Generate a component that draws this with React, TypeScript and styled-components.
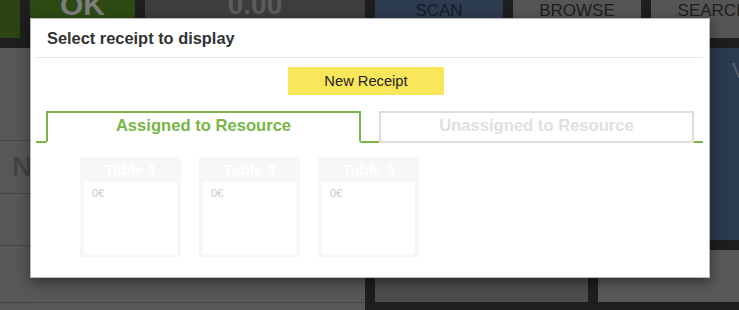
import React from "react";
import styled, { createGlobalStyle } from "styled-components";

const Global = createGlobalStyle`
  html, body { margin: 0; padding: 0; }
  body {
    background: #1e1e1e;
    font-family: "Liberation Sans", Arial, sans-serif;
    width: 739px;
    height: 310px;
    overflow: hidden;
  }
  #root { position: relative; width: 739px; height: 310px; }
`;

const Page = styled.div`
  display: flex;
  flex-direction: column;
  gap: 10px;
  width: 739px;
  height: 310px;
  overflow: hidden;
`;

const TopRow = styled.div`
  display: flex;
  gap: 10px;
  height: 38px;
  flex-shrink: 0;
`;

const TopCell = styled.div<{ $w?: number; $bg: string; $color: string; $size: number; $bold?: boolean; $shift?: number }>`
  flex: ${(p) => (p.$w ? `0 0 ${p.$w}px` : "1 1 auto")};
  background: ${(p) => p.$bg};
  color: ${(p) => p.$color};
  font-size: ${(p) => p.$size}px;
  font-weight: ${(p) => (p.$bold ? 700 : 400)};
  display: flex;
  justify-content: center;
  align-items: flex-start;
  line-height: 20px;
  white-space: nowrap;
  overflow: hidden;

  & > span {
    position: relative;
    top: ${(p) => p.$shift ?? 0}px;
  }
`;

const Main = styled.div`
  display: flex;
  gap: 10px;
  flex: 1;
`;

const LeftPanel = styled.div`
  flex: 0 0 365px;
  background: #575757;
  display: flex;
  flex-direction: column;
`;

const LeftRow = styled.div<{ $h: number }>`
  height: ${(p) => p.$h}px;
  border-bottom: 1px solid #454545;
  box-sizing: border-box;
  flex-shrink: 0;
  display: flex;
  align-items: center;
  padding-left: 12px;
  color: #444;
  font-size: 28px;
  font-weight: 700;
`;

const Column = styled.div<{ $w?: number }>`
  flex: ${(p) => (p.$w ? `0 0 ${p.$w}px` : "1 1 auto")};
  display: flex;
  flex-direction: column;
  gap: 10px;
`;

const BluePanel = styled.div`
  flex: 0 0 192px;
  background: #2c3a4e;
  color: #555f6e;
  font-size: 22px;
  padding: 10px 0 0 134px;
  box-sizing: border-box;
  overflow: hidden;
`;

const GrayButton = styled.div<{ $bg: string }>`
  height: 52px;
  background: ${(p) => p.$bg};
  color: #1a1a1a;
  font-size: 16px;
  display: flex;
  justify-content: center;
  align-items: flex-end;
  padding-bottom: 20px;
  box-sizing: border-box;
`;

const Modal = styled.div`
  position: absolute;
  left: 30px;
  top: 18px;
  width: 680px;
  height: 260px;
  box-sizing: border-box;
  background: #fff;
  border: 1px solid #b8b8b8;
  box-shadow: 0 4px 12px rgba(0, 0, 0, 0.45);
  display: flex;
  flex-direction: column;
`;

const Header = styled.div`
  height: 37px;
  margin: 0 6px 0 5px;
  border-bottom: 1px solid #e8e8e8;
  display: flex;
  align-items: center;
  padding-left: 11px;
  padding-top: 1px;
  font-size: 16.4px;
  font-weight: 700;
  color: #333;
`;

const Body = styled.div`
  margin: 0 6px 0 5px;
  display: flex;
  flex-direction: column;
`;

const ButtonRow = styled.div`
  display: flex;
  justify-content: center;
  padding: 9px 7px 0 0;
`;

const NewReceipt = styled.button`
  width: 156px;
  height: 28px;
  border: none;
  background: #f9e65b;
  color: #222;
  font-family: "Liberation Sans", Arial, sans-serif;
  font-size: 14.7px;
  padding: 0;
  cursor: pointer;
`;

const Tabs = styled.div`
  margin-top: 16px;
  display: flex;
  gap: 18px;
  padding-left: 10px;
  border-bottom: 2px solid #7ab547;
  height: 30px;
`;

const Tab = styled.div<{ $active?: boolean }>`
  width: 315px;
  height: 32px;
  box-sizing: border-box;
  border: 2px solid ${(p) => (p.$active ? "#7ab547" : "#dedede")};
  border-bottom: ${(p) => (p.$active ? "2px solid #fff" : "2px solid #dedede")};
  background: #fff;
  color: ${(p) => (p.$active ? "#7ab547" : "#e0e0e0")};
  font-size: 16.6px;
  font-weight: 700;
  display: flex;
  justify-content: center;
  align-items: center;
  padding-bottom: 3px;
`;

const Cards = styled.div`
  display: flex;
  gap: 18px;
  padding: 14px 0 0 44px;
`;

const Card = styled.div`
  width: 101px;
  height: 100px;
  box-sizing: border-box;
  background: #f7f7f7;
  padding: 0 4px 3px;
  display: flex;
  flex-direction: column;
`;

const CardTitle = styled.div`
  height: 25px;
  color: #fff;
  font-size: 15.5px;
  font-weight: 700;
  display: flex;
  justify-content: center;
  align-items: center;
`;

const CardBody = styled.div`
  flex: 1;
  background: #fff;
  color: #c8c8c8;
  font-size: 11px;
  padding: 5px 8px;
`;

const tables = ["Table 1", "Table 2", "Table 3"];

export default function App() {
  return (
    <>
      <Global />
      <Page>
        <TopRow>
          <TopCell $w={20} $bg="#2b4412" $color="#888" $size={28} />
          <TopCell $w={105} $bg="#2e4a13" $color="#7d7d7d" $size={30} $bold $shift={-5}>
            <span>OK</span>
          </TopCell>
          <TopCell $w={220} $bg="#3d3d3d" $color="#5c5c5c" $size={28} $bold $shift={-5}>
            <span>0.00</span>
          </TopCell>
          <TopCell $w={128} $bg="#2d3b50" $color="#161c26" $size={17} $shift={1}>
            <span>SCAN</span>
          </TopCell>
          <TopCell $w={128} $bg="#555555" $color="#1e1e1e" $size={17} $shift={1}>
            <span>BROWSE</span>
          </TopCell>
          <TopCell $bg="#555555" $color="#1e1e1e" $size={17} $shift={1}>
            <span style={{ paddingLeft: 36 }}>SEARCH</span>
          </TopCell>
        </TopRow>
        <Main>
          <LeftPanel>
            <LeftRow $h={93} />
            <LeftRow $h={53}>N</LeftRow>
            <LeftRow $h={52} />
            <LeftRow $h={57} />
          </LeftPanel>
          <Column $w={213}>
            <BluePanel />
            <GrayButton $bg="#4c4c4c">OPEN TAB</GrayButton>
          </Column>
          <Column>
            <BluePanel>V</BluePanel>
            <GrayButton $bg="#585858" />
          </Column>
        </Main>
      </Page>
      <Modal>
        <Header>Select receipt to display</Header>
        <Body>
          <ButtonRow>
            <NewReceipt>New Receipt</NewReceipt>
          </ButtonRow>
          <Tabs>
            <Tab $active>Assigned to Resource</Tab>
            <Tab>Unassigned to Resource</Tab>
          </Tabs>
          <Cards>
            {tables.map((t) => (
              <Card key={t}>
                <CardTitle>{t}</CardTitle>
                <CardBody>0€</CardBody>
              </Card>
            ))}
          </Cards>
        </Body>
      </Modal>
    </>
  );
}
